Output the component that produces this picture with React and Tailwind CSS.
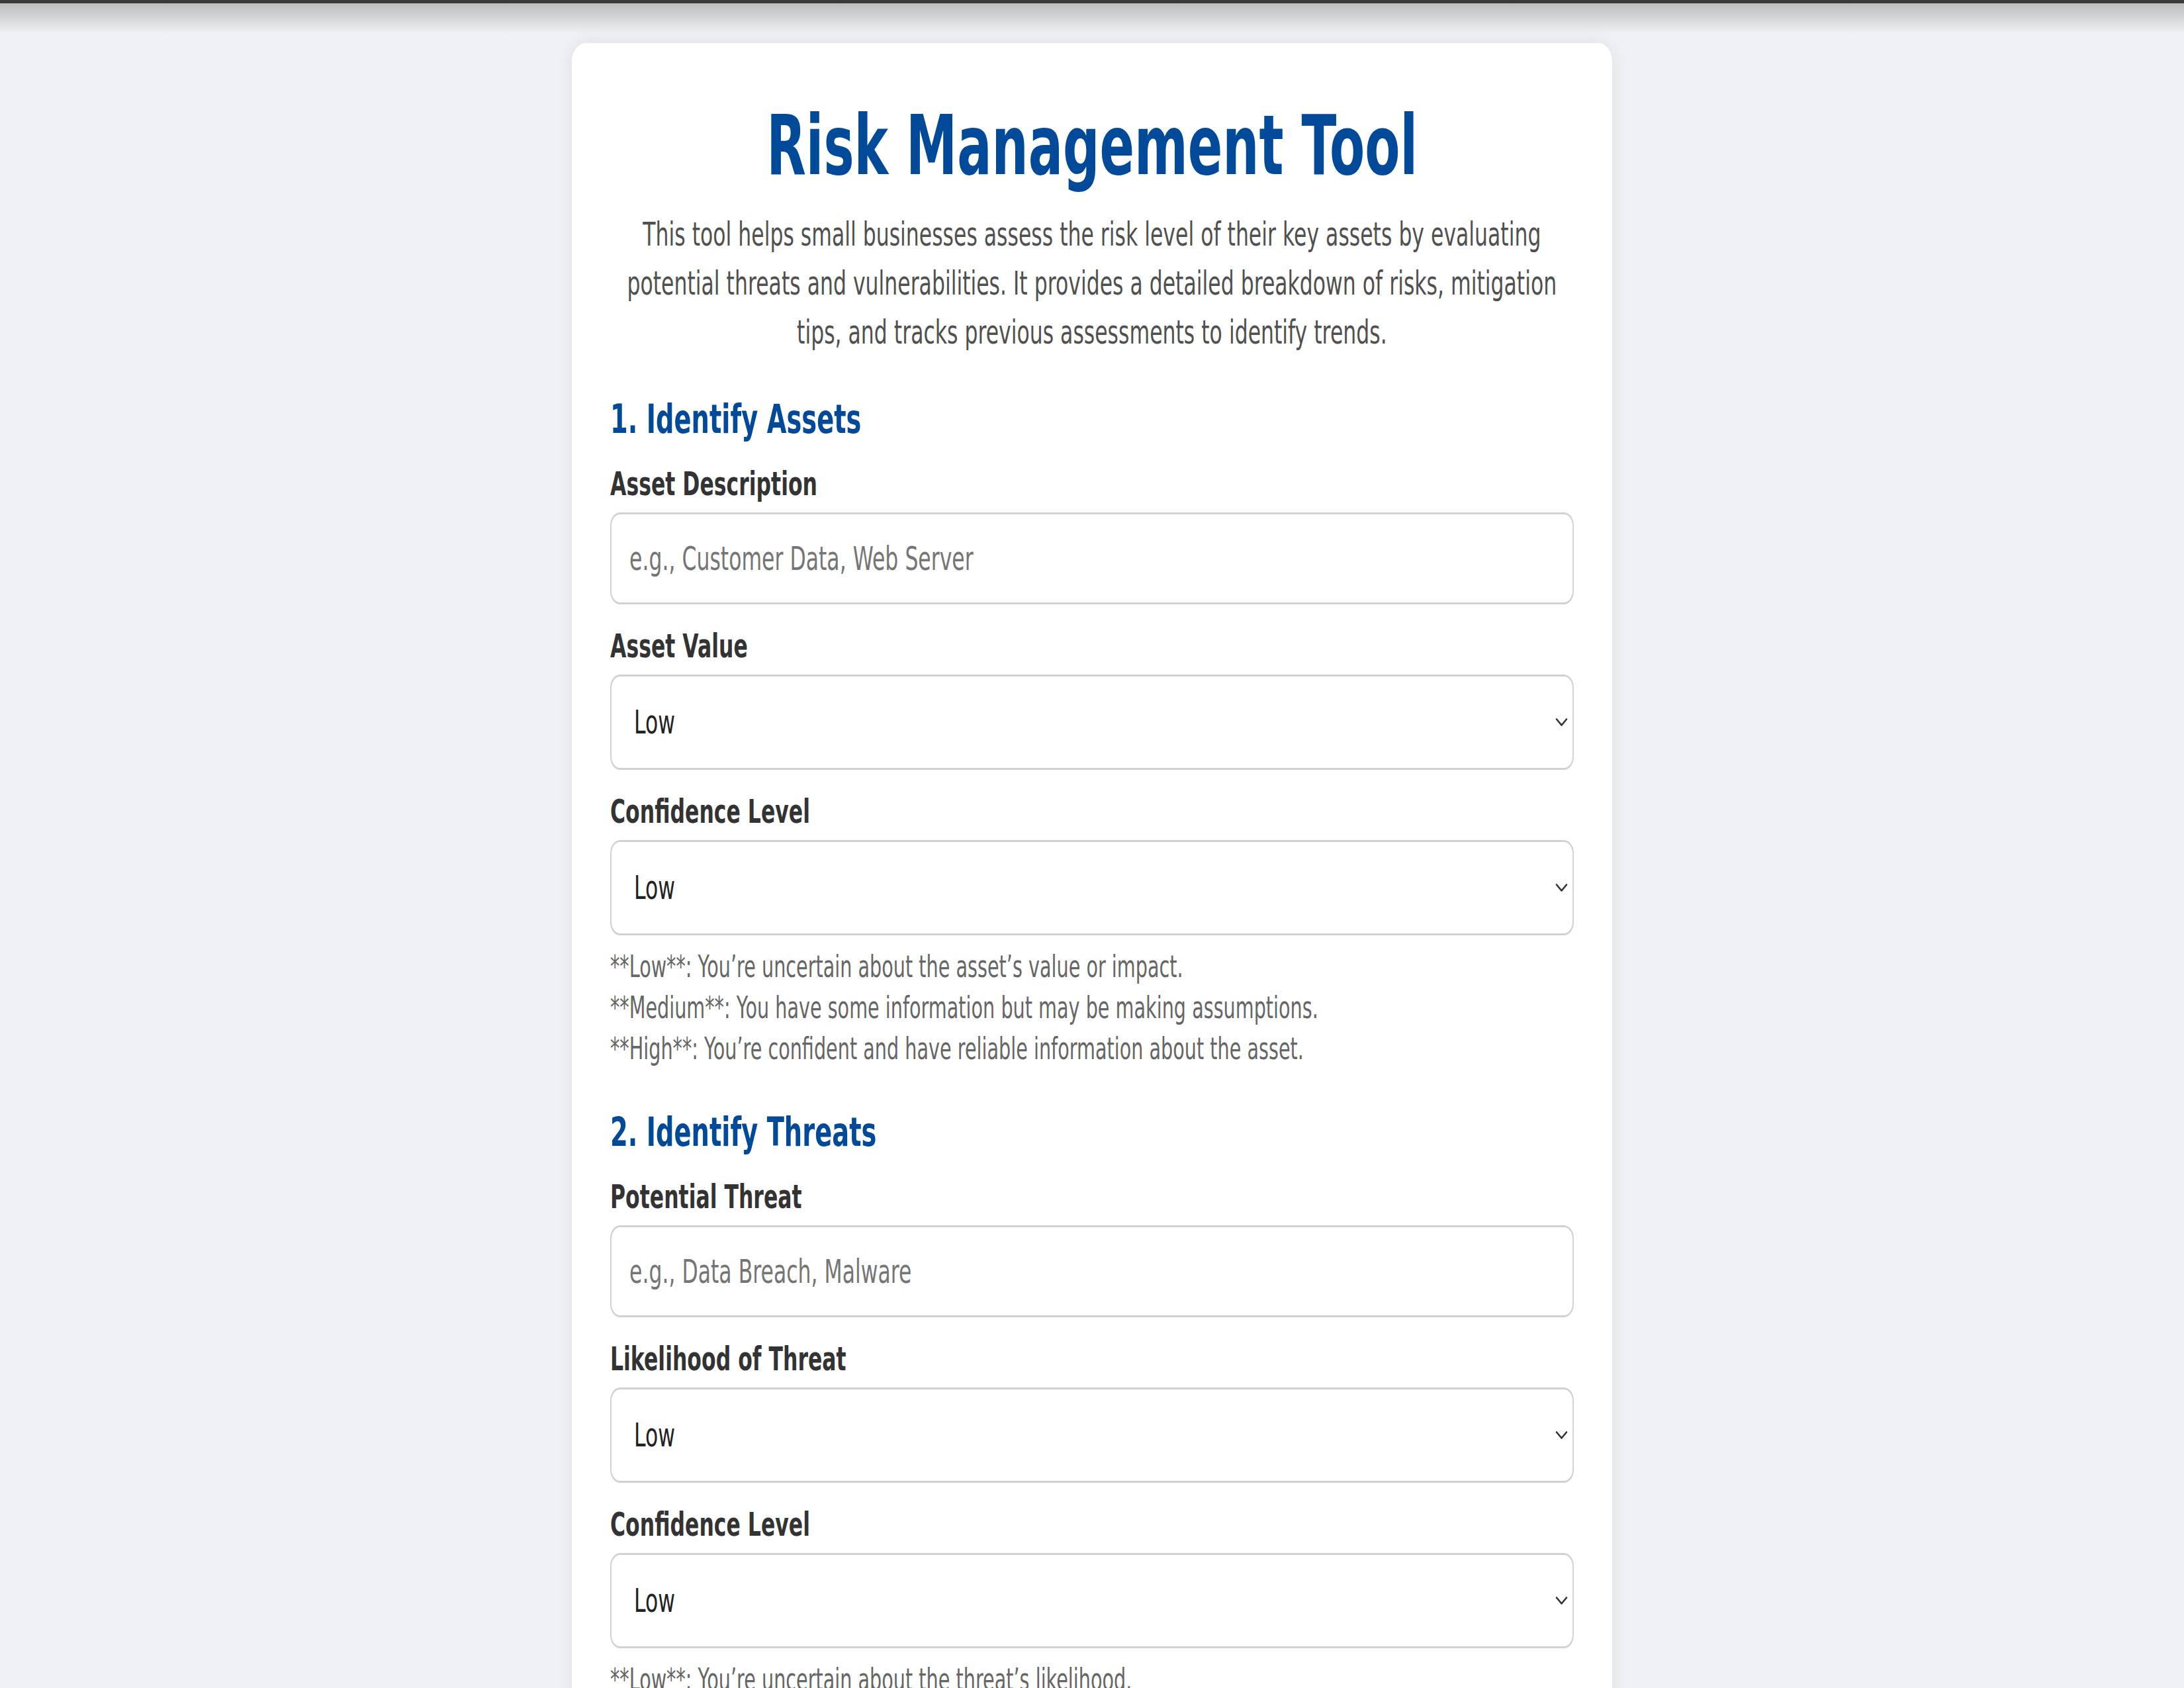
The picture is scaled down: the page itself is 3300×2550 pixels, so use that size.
import React from 'react'

// the shot is squeezed sideways, so text gets a horizontal squeeze
const SQUEEZE = 'origin-left scale-x-[0.63]'

const LEVELS = ['Low', 'Medium', 'High']

const SECTIONS = [
  {
    title: '1. Identify Assets',
    fields: [
      { label: 'Asset Description', type: 'text', placeholder: 'e.g., Customer Data, Web Server' },
      { label: 'Asset Value', type: 'select' },
      {
        label: 'Confidence Level',
        type: 'select',
        help: [
          '**Low**: You’re uncertain about the asset’s value or impact.',
          '**Medium**: You have some information but may be making assumptions.',
          '**High**: You’re confident and have reliable information about the asset.',
        ],
      },
    ],
  },
  {
    title: '2. Identify Threats',
    fields: [
      { label: 'Potential Threat', type: 'text', placeholder: 'e.g., Data Breach, Malware' },
      { label: 'Likelihood of Threat', type: 'select' },
      {
        label: 'Confidence Level',
        type: 'select',
        help: [
          '**Low**: You’re uncertain about the threat’s likelihood.',
          '**Medium**: You have some evidence but the threat is not confirmed.',
          '**High**: You have clear evidence that the threat is likely.',
        ],
      },
    ],
  },
  {
    title: '3. Identify Vulnerabilities',
    fields: [
      { label: 'Vulnerability', type: 'text', placeholder: 'e.g., Weak Passwords, Outdated Software' },
      { label: 'Severity of Vulnerability', type: 'select' },
    ],
  },
]

function Chevron() {
  return (
    <svg
      className="pointer-events-none absolute right-[7px] top-1/2 -translate-y-1/2"
      width="19"
      height="14"
      viewBox="0 0 19 14"
      fill="none"
    >
      <path d="M2 2.5 L9.5 11.5 L17 2.5" stroke="#333" strokeWidth="2.6" strokeLinecap="round" strokeLinejoin="round" />
    </svg>
  )
}

function TextField({ placeholder }) {
  return (
    <div className="mt-[13px] h-[139px] rounded-[15px/20px] border-x-2 border-y-[3px] border-[#d2d2d2] bg-white pl-[27px] pr-[20px]">
      <input
        type="text"
        placeholder={placeholder}
        className={`h-full w-[calc(100%/0.63)] bg-transparent text-[50px] text-[#222] outline-none placeholder:text-[#757575] ${SQUEEZE}`}
      />
    </div>
  )
}

function SelectField() {
  return (
    <div className="relative mt-[13px] h-[144px] rounded-[15px/20px] border-x-2 border-y-[3px] border-[#d2d2d2] bg-white pl-[34px] pr-[44px]">
      <select
        defaultValue="Low"
        className={`h-full w-[calc(100%/0.63)] appearance-none bg-transparent text-[50px] text-[#222] outline-none ${SQUEEZE}`}
      >
        {LEVELS.map((l) => (
          <option key={l}>{l}</option>
        ))}
      </select>
      <Chevron />
    </div>
  )
}

function Field({ label, type, placeholder, help }) {
  return (
    <div>
      <label className={`block whitespace-nowrap text-[50px] font-bold leading-[60px] text-[#333] ${SQUEEZE}`}>
        {label}
      </label>
      {type === 'text' ? <TextField placeholder={placeholder} /> : <SelectField />}
      {help && (
        <div className="mt-[17px]">
          {help.map((line) => (
            <p key={line} className={`whitespace-nowrap text-[45.5px] leading-[62px] text-[#666] ${SQUEEZE}`}>
              {line}
            </p>
          ))}
        </div>
      )}
    </div>
  )
}

function Section({ title, fields }) {
  return (
    <section className="mt-[54px] first:mt-[55px]">
      <h2 className={`whitespace-nowrap text-[61px] font-bold leading-[80px] text-[#004a99] ${SQUEEZE}`}>{title}</h2>
      <div className="mt-[28px] flex flex-col gap-[33px]">
        {fields.map((f) => (
          <Field key={f.label + f.type} {...f} />
        ))}
      </div>
    </section>
  )
}

export default function App() {
  return (
    <div className="min-h-screen bg-[#eff1f4] font-['DejaVu_Sans',sans-serif]">
      {/* window edge + its shadow */}
      <div className="h-[5px] bg-[#3a3a3a]" />
      <div className="h-[45px] bg-linear-to-b from-[#bcbcbc] to-[#eff1f4]" />

      <main className="mx-auto mt-[15px] w-[1572px] rounded-[21px/28px] bg-white px-[58px] pb-[90px] pt-[80px] shadow-[0_0_28px_rgba(0,0,0,0.08)]">
        <div className="flex justify-center">
          <h1 className="shrink-0 whitespace-nowrap text-center text-[124px] font-bold leading-[150px] text-[#004a99] scale-x-[0.625]">
            Risk Management Tool
          </h1>
        </div>

        <div className="mt-[22px] flex justify-center">
          <p className="shrink-0 whitespace-nowrap text-center text-[50px] leading-[74px] text-[#505050] scale-x-[0.63]">
            This tool helps small businesses assess the risk level of their key assets by evaluating
            <br />
            potential threats and vulnerabilities. It provides a detailed breakdown of risks, mitigation
            <br />
            tips, and tracks previous assessments to identify trends.
          </p>
        </div>

        {SECTIONS.map((s) => (
          <Section key={s.title} {...s} />
        ))}
      </main>
    </div>
  )
}
